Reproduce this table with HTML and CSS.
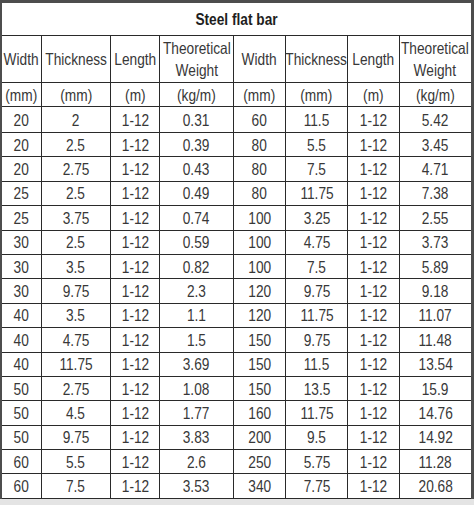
FILE: index.html
```html
<!DOCTYPE html>
<html>
<head>
<meta charset="utf-8">
<link rel="stylesheet" href="styles.css">
</head>
<body>
<div class="page">
<table class="spec">
  <colgroup>
    <col class="c1"><col class="c2"><col class="c3"><col class="c4">
    <col class="c5"><col class="c6"><col class="c7"><col class="c8">
  </colgroup>
  <tr class="title-row"><td colspan="8" class="title"><span>Steel flat bar</span></td></tr>
  <tr class="head-row">
    <td><span>Width</span></td><td><span>Thickness</span></td><td><span>Length</span></td><td><span>Theoretical<br>Weight</span></td>
    <td><span>Width</span></td><td><span>Thickness</span></td><td><span>Length</span></td><td><span>Theoretical<br>Weight</span></td>
  </tr>
  <tr class="unit-row">
    <td><span>(mm)</span></td><td><span>(mm)</span></td><td><span>(m)</span></td><td><span>(kg/m)</span></td>
    <td><span>(mm)</span></td><td><span>(mm)</span></td><td><span>(m)</span></td><td><span>(kg/m)</span></td>
  </tr>
  <tr class="first"><td><span>20</span></td><td><span>2</span></td><td><span>1-12</span></td><td><span>0.31</span></td><td><span>60</span></td><td><span>11.5</span></td><td><span>1-12</span></td><td><span>5.42</span></td></tr>
  <tr class="data"><td><span>20</span></td><td><span>2.5</span></td><td><span>1-12</span></td><td><span>0.39</span></td><td><span>80</span></td><td><span>5.5</span></td><td><span>1-12</span></td><td><span>3.45</span></td></tr>
  <tr class="data"><td><span>20</span></td><td><span>2.75</span></td><td><span>1-12</span></td><td><span>0.43</span></td><td><span>80</span></td><td><span>7.5</span></td><td><span>1-12</span></td><td><span>4.71</span></td></tr>
  <tr class="data"><td><span>25</span></td><td><span>2.5</span></td><td><span>1-12</span></td><td><span>0.49</span></td><td><span>80</span></td><td><span>11.75</span></td><td><span>1-12</span></td><td><span>7.38</span></td></tr>
  <tr class="data"><td><span>25</span></td><td><span>3.75</span></td><td><span>1-12</span></td><td><span>0.74</span></td><td><span>100</span></td><td><span>3.25</span></td><td><span>1-12</span></td><td><span>2.55</span></td></tr>
  <tr class="data"><td><span>30</span></td><td><span>2.5</span></td><td><span>1-12</span></td><td><span>0.59</span></td><td><span>100</span></td><td><span>4.75</span></td><td><span>1-12</span></td><td><span>3.73</span></td></tr>
  <tr class="data"><td><span>30</span></td><td><span>3.5</span></td><td><span>1-12</span></td><td><span>0.82</span></td><td><span>100</span></td><td><span>7.5</span></td><td><span>1-12</span></td><td><span>5.89</span></td></tr>
  <tr class="data"><td><span>30</span></td><td><span>9.75</span></td><td><span>1-12</span></td><td><span>2.3</span></td><td><span>120</span></td><td><span>9.75</span></td><td><span>1-12</span></td><td><span>9.18</span></td></tr>
  <tr class="data"><td><span>40</span></td><td><span>3.5</span></td><td><span>1-12</span></td><td><span>1.1</span></td><td><span>120</span></td><td><span>11.75</span></td><td><span>1-12</span></td><td><span>11.07</span></td></tr>
  <tr class="data"><td><span>40</span></td><td><span>4.75</span></td><td><span>1-12</span></td><td><span>1.5</span></td><td><span>150</span></td><td><span>9.75</span></td><td><span>1-12</span></td><td><span>11.48</span></td></tr>
  <tr class="data"><td><span>40</span></td><td><span>11.75</span></td><td><span>1-12</span></td><td><span>3.69</span></td><td><span>150</span></td><td><span>11.5</span></td><td><span>1-12</span></td><td><span>13.54</span></td></tr>
  <tr class="data"><td><span>50</span></td><td><span>2.75</span></td><td><span>1-12</span></td><td><span>1.08</span></td><td><span>150</span></td><td><span>13.5</span></td><td><span>1-12</span></td><td><span>15.9</span></td></tr>
  <tr class="data"><td><span>50</span></td><td><span>4.5</span></td><td><span>1-12</span></td><td><span>1.77</span></td><td><span>160</span></td><td><span>11.75</span></td><td><span>1-12</span></td><td><span>14.76</span></td></tr>
  <tr class="data"><td><span>50</span></td><td><span>9.75</span></td><td><span>1-12</span></td><td><span>3.83</span></td><td><span>200</span></td><td><span>9.5</span></td><td><span>1-12</span></td><td><span>14.92</span></td></tr>
  <tr class="data"><td><span>60</span></td><td><span>5.5</span></td><td><span>1-12</span></td><td><span>2.6</span></td><td><span>250</span></td><td><span>5.75</span></td><td><span>1-12</span></td><td><span>11.28</span></td></tr>
  <tr class="data"><td><span>60</span></td><td><span>7.5</span></td><td><span>1-12</span></td><td><span>3.53</span></td><td><span>340</span></td><td><span>7.75</span></td><td><span>1-12</span></td><td><span>20.68</span></td></tr>
</table>
</div>
</body>
</html>
```
FILE: styles.css
```css
html, body {
  margin: 0;
  padding: 0;
  background: #e4e4e4;
}
.page {
  width: 474px;
  height: 505px;
  overflow: hidden;
}
.spec {
  width: 474px;
  border-collapse: collapse;
  table-layout: fixed;
  background: #fff;
  border-top: 3px solid #4d4d4d;
  border-left: 2px solid #4d4d4d;
  border-right: 3px solid #4d4d4d;
  border-bottom: 1px solid #333;
  font-family: "Liberation Sans", Arial, sans-serif;
  font-size: 16.5px;
  color: #383838;
}
.c1 { width: 40px; }
.c2 { width: 69px; }
.c3 { width: 49px; }
.c4 { width: 73px; }
.c5 { width: 52px; }
.c6 { width: 62px; }
.c7 { width: 51px; }
.c8 { width: 73px; }
.spec td {
  border: 1px solid #2a2a2a;
  padding: 0;
  text-align: center;
  vertical-align: middle;
  line-height: 22px;
  white-space: nowrap;
}
.spec td span {
  display: inline-block;
  margin: 0 -20px;
  transform: scaleX(0.83);
}
.spec .title {
  font-weight: bold;
  color: #1e1e1e;
  border-left: 2px solid #4d4d4d;
  border-right: 3px solid #4d4d4d;
}
.spec tr.title-row { height: 34px; }
.spec tr.head-row { height: 47px; }
.spec tr.unit-row { height: 24px; }
.spec tr.first { height: 26px; }
.spec tr.data { height: 24.4px; }
```
